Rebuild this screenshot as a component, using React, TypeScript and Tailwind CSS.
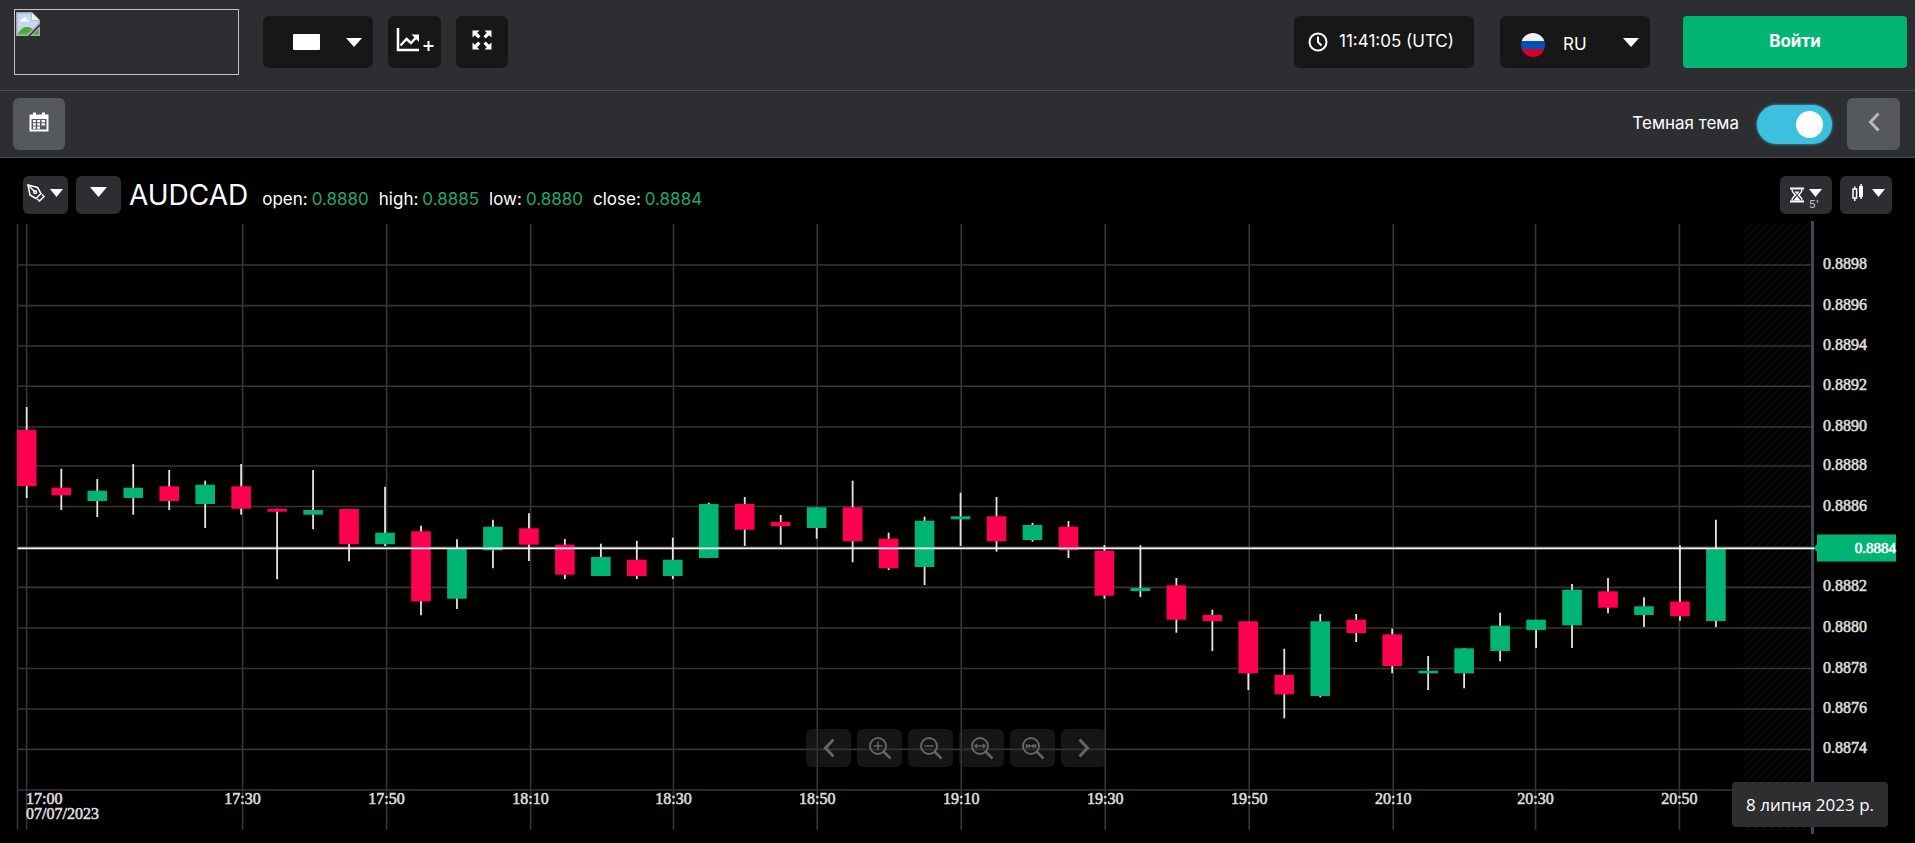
import type { ReactNode } from "react";

type Candle = {
  up: boolean;
  body: [number, number];
  wick: [number, number];
};

const c = (up: boolean, top: number, bottom: number, high = top, low = bottom): Candle => ({
  up,
  body: [top, bottom],
  wick: [high, low],
});

const candles: Candle[] = [
  c(false, 429.7, 486, 407, 498),
  c(false, 487.7, 495.3, 468.7, 510),
  c(true, 490.7, 501, 479, 517),
  c(true, 487.7, 498, 464, 514.7),
  c(false, 486.3, 501, 470, 510),
  c(true, 484.7, 504, 480.7, 528),
  c(false, 486.3, 508.7, 464, 514.7),
  c(false, 508.7, 511.7, 508.7, 579.3),
  c(true, 510, 514.7, 470, 529.3),
  c(false, 509, 544.3, 509, 561.3),
  c(true, 532.7, 544.3, 486.7, 546),
  c(false, 531.3, 601.3, 525.7, 615.3),
  c(true, 548, 598.7, 539.3, 609),
  c(true, 526.7, 550.3, 519.7, 568.3),
  c(false, 528.3, 544.7, 513.3, 561),
  c(false, 544.7, 574.7, 539, 579),
  c(true, 557, 576, 543.7, 576),
  c(false, 559.7, 576, 540.7, 579),
  c(true, 559.7, 576, 537.7, 579),
  c(true, 504, 558, 502.7, 558),
  c(false, 504, 529.7, 497, 546),
  c(false, 522, 526.3, 515, 544.7),
  c(true, 507.3, 528, 507.3, 538.7),
  c(false, 507.3, 541.3, 480.7, 562.3),
  c(false, 538.7, 568.3, 532.7, 570),
  c(true, 520.7, 567, 516.7, 585),
  c(true, 516.3, 519.3, 492.7, 546),
  c(false, 516.3, 541.3, 497, 551.7),
  c(true, 525, 540, 522.7, 541.7),
  c(false, 526.7, 550.3, 521, 558),
  c(false, 550.7, 595.7, 545, 598.7),
  c(true, 588, 591, 545.3, 597),
  c(false, 585.3, 619.7, 578, 632.7),
  c(false, 615, 621, 609.7, 651),
  c(false, 621.3, 673.3, 621.3, 690),
  c(false, 675, 694.3, 648.7, 718.3),
  c(true, 621.3, 696, 614, 697.3),
  c(false, 619.7, 633, 614, 642),
  c(false, 634.3, 666, 628.7, 673.3),
  c(true, 670.7, 673.3, 656, 690),
  c(true, 648.3, 673.3, 648.3, 688.3),
  c(true, 625.7, 651, 612.7, 661.3),
  c(true, 619.7, 630, 619.7, 648),
  c(true, 589.7, 625.3, 584, 648),
  c(false, 591.3, 607.7, 578, 613.3),
  c(true, 606.3, 615, 597.3, 627),
  c(false, 601.7, 616.3, 545.3, 620.7),
  c(true, 549, 621, 519.7, 627),
];

const candleX = (i: number) => (i === 0 ? 26.7 : 61.3 + (i - 1) * 35.97);

const times = [
  { x: 242.6, label: "17:30" },
  { x: 386.6, label: "17:50" },
  { x: 530.6, label: "18:10" },
  { x: 673.5, label: "18:30" },
  { x: 817.2, label: "18:50" },
  { x: 961.2, label: "19:10" },
  { x: 1105.2, label: "19:30" },
  { x: 1249.2, label: "19:50" },
  { x: 1393.2, label: "20:10" },
  { x: 1535.6, label: "20:30" },
  { x: 1679.4, label: "20:50" },
];

const prices = [
  { y: 265, label: "0.8898" },
  { y: 305.6, label: "0.8896" },
  { y: 346, label: "0.8894" },
  { y: 386.2, label: "0.8892" },
  { y: 427, label: "0.8890" },
  { y: 466, label: "0.8888" },
  { y: 506.5, label: "0.8886" },
  { y: 547, label: "" },
  { y: 587.4, label: "0.8882" },
  { y: 628, label: "0.8880" },
  { y: 668.5, label: "0.8878" },
  { y: 709, label: "0.8876" },
  { y: 749.4, label: "0.8874" },
  { y: 790, label: "" },
];

const quotes = [
  { name: "open:", value: "0.8880" },
  { name: "high:", value: "0.8885" },
  { name: "low:", value: "0.8880" },
  { name: "close:", value: "0.8884" },
];

function Caret({ className = "h-[9px] w-4" }: { className?: string }) {
  return (
    <svg viewBox="0 0 16 9" className={className} fill="currentColor" preserveAspectRatio="none" aria-hidden="true">
      <path d="M0 0h16L8 9z" />
    </svg>
  );
}

function BrokenImage() {
  return (
    <svg viewBox="0 0 24 24" className="h-6 w-6" aria-hidden="true">
      <path d="M0 0h16l8 8v4L12 24H0z" fill="#a9abae" />
      <path d="M1.500 1.500h14v7h7v3L11 22.500H1.500z" fill="#c3d9f8" />
      <path d="M16 1l7 7h-7z" fill="#f1f1f1" />
      <path d="M4 9.500c0-2 1.500-2.500 2.500-2.500C7 5 11 5 11 7.500c1.500 0 2 1 2 2z" fill="#fff" />
      <path d="M1.500 22.500C4 17 8 14.500 12 15c2 .2 3.500 1 4.500 2L11 22.500z" fill="#52a935" />
      <path d="M24 14v10H14z" fill="#a9abae" />
      <path d="M22.500 17v5.500H17z" fill="#52a935" />
    </svg>
  );
}

function ChartPlus() {
  return (
    <svg viewBox="0 0 38 24" className="h-6 w-[38px]" fill="none" stroke="currentColor" strokeWidth="2" aria-hidden="true">
      <path d="M2 0v22h21" strokeWidth="2.500" />
      <path d="M4.500 17.500l6-6.500 4.500 4 6-6.500" strokeWidth="2.400" />
      <path d="M15.500 6.500H23V14z" fill="currentColor" stroke="none" />
      <path d="M32.500 13v10M27.500 18h10" />
    </svg>
  );
}

function Expand() {
  return (
    <svg viewBox="0 0 20 20" className="h-5 w-5" fill="currentColor" aria-hidden="true">
      <path d="M.5.500h7L5.200 2.800l3.300 3.400-2.300 2.300-3.400-3.300L.5 7.500z" />
      <path d="M19.500.500v7l-2.300-2.300-3.400 3.300-2.300-2.300 3.300-3.400L12.500.500z" />
      <path d="M.5 19.500v-7l2.300 2.300 3.400-3.300 2.300 2.300-3.300 3.400 2.300 2.300z" />
      <path d="M19.500 19.500h-7l2.300-2.300-3.300-3.400 2.300-2.300 3.400 3.300 2.300-2.300z" />
    </svg>
  );
}

function Calendar() {
  return (
    <svg viewBox="0 0 20 20" className="h-5 w-5" fill="currentColor" aria-hidden="true">
      <path fillRule="evenodd" d="M.5 2.500H4V.5h3v2h6V.5h3v2h3.500v17H.5zM2.500 7v10.500h15V7z" />
      <path d="M4 8h2.800v2.300H4zM8.200 8H11v2.300H8.200zM12.500 8h3.500v2.300h-3.500zM4 11.200h2.800v2.300H4zM8.200 11.200H11v2.300H8.200zM12.500 11.200h3.500v2.300h-3.500zM4 14.400h2.800v2.300H4zM8.200 14.400H11v2.300H8.200z" />
    </svg>
  );
}

function Clock() {
  return (
    <svg viewBox="0 0 20 20" className="h-5 w-5" fill="none" stroke="currentColor" strokeWidth="2" aria-hidden="true">
      <circle cx="10" cy="10" r="8.500" />
      <path d="M10 4.500V10l3.500 3.500" />
    </svg>
  );
}

function Flag() {
  return (
    <svg viewBox="0 0 24 24" className="h-6 w-6" aria-hidden="true">
      <clipPath id="flag-round">
        <circle cx="12" cy="12" r="12" />
      </clipPath>
      <g clipPath="url(#flag-round)">
        <path d="M0 0h24v8H0z" fill="#f0f0f0" />
        <path d="M0 8h24v8H0z" fill="#0052b4" />
        <path d="M0 16h24v8H0z" fill="#d80027" />
      </g>
    </svg>
  );
}

function Pen() {
  return (
    <svg viewBox="0 0 18 18" className="h-[18px] w-[18px]" fill="none" stroke="currentColor" strokeWidth="1.500" aria-hidden="true">
      <path d="M1 1l9.500 2.500 3.500 6-5 5-6-3.500z" />
      <path d="M1 1l6.500 6.500" />
      <circle cx="8.200" cy="8.200" r="1.400" />
      <path d="M15 10.500l2 2-4.500 4.500-2-2" />
    </svg>
  );
}

function Hourglass() {
  return (
    <svg viewBox="0 0 16 16" className="h-4 w-4" fill="none" stroke="currentColor" aria-hidden="true">
      <path d="M1 1.500h14M1 14.500h14" strokeWidth="2" />
      <path d="M3 2.500c0 3 2 4 3.500 5.500C5 9.500 3 10.500 3 13.500M13 2.500c0 3-2 4-3.500 5.500 1.500 1.500 3.500 2.500 3.500 5.500" strokeWidth="1.500" />
      <path d="M5.500 4.500h5L8 7.500zM8 9l3.500 4.500h-7z" fill="currentColor" stroke="none" />
    </svg>
  );
}

function CandleIcon() {
  return (
    <svg viewBox="0 0 12 18" className="h-[18px] w-3" fill="none" stroke="currentColor" strokeWidth="1.500" aria-hidden="true">
      <path d="M2.800 2.500V5M2.800 14v3M1 5h3.600v9H1z" />
      <path d="M9 0v15" />
      <path d="M7 2h4v11H7z" fill="currentColor" stroke="none" />
    </svg>
  );
}

function Magnifier({ children }: { children: ReactNode }) {
  return (
    <svg viewBox="0 0 24 24" className="h-6 w-6" fill="none" stroke="currentColor" strokeWidth="2" aria-hidden="true">
      <circle cx="10" cy="10" r="8" />
      <path d="M15.500 15.500l7 7" strokeWidth="2.500" />
      {children}
    </svg>
  );
}

function Chevron({ d }: { d: string }) {
  return (
    <svg viewBox="0 0 12 20" className="h-5 w-3" fill="none" stroke="currentColor" strokeWidth="3" aria-hidden="true">
      <path d={d} />
    </svg>
  );
}

const LEFT = "M10.500 1.500L2.500 10l8 8.500";
const RIGHT = "M1.500 1.500l8 8.500-8 8.500";

const zoomButtons = [
  { label: "Back", icon: <Chevron d={LEFT} /> },
  { label: "Zoom in", icon: <Magnifier><path d="M10 5.500v9M5.500 10h9" strokeWidth="1.500" /></Magnifier> },
  { label: "Zoom out", icon: <Magnifier><path d="M5.500 10h9" strokeWidth="1.500" /></Magnifier> },
  { label: "Widen", icon: <Magnifier><path d="M5.500 10h9M7 8l-2 2 2 2M13 8l2 2-2 2" strokeWidth="1.500" /></Magnifier> },
  { label: "Narrow", icon: <Magnifier><path d="M5.500 10h9M5.500 8v4M14.500 8v4M8.500 8.500L7 10l1.500 1.500M11.500 8.500L13 10l-1.500 1.500" strokeWidth="1.500" /></Magnifier> },
  { label: "Forward", icon: <Chevron d={RIGHT} /> },
];

function PriceChart() {
  return (
    <svg viewBox="0 220 1915 623" className="block h-auto w-full" role="img" aria-label="AUDCAD">
      <defs>
        <pattern id="hatch" width="8" height="8" patternUnits="userSpaceOnUse">
          <path d="M-2 2l4-4M0 8l8-8M6 10l4-4" stroke="#0a0a0a" strokeWidth="2" />
        </pattern>
      </defs>
      <rect x="1743" y="224" width="68" height="606" fill="url(#hatch)" />
      <g stroke="#363636" strokeWidth="1.600">
        <path d="M17.500 224v606M26.600 224v606" />
        {times.map((t) => (
          <path key={t.label} d={`M${t.x} 224v606`} />
        ))}
        {prices.map((p) => (
          <path key={p.y} d={`M17.500 ${p.y}H1811`} />
        ))}
      </g>
      <rect x="1811" y="221" width="3" height="613" fill="#3b4856" />
      {candles.map((k, i) => (
        <g key={i}>
          <path d={`M${candleX(i)} ${k.wick[0]}V${k.wick[1]}`} stroke="#e4e4e4" strokeWidth="1.800" />
          <rect
            x={candleX(i) - 9.8}
            y={k.body[0]}
            width="19.600"
            height={k.body[1] - k.body[0]}
            fill={k.up ? "#00b574" : "#ff0050"}
          />
        </g>
      ))}
      <path d="M17.500 548.400H1815" stroke="#ffffff" strokeWidth="1.900" />
      <path d="M1814 548l3-4v-9.500h79v27h-79V552z" fill="#00b574" />
      <g className="font-['Liberation_Serif',serif] text-[16px]" fill="#dcdcdc" stroke="#dcdcdc" strokeWidth="0.600">
        {prices.map((p) => (
          <text key={p.y} x="1823" y={p.y + 4}>
            {p.label}
          </text>
        ))}
        <text x="1896" y="553" textAnchor="end" className="text-[15px]" fill="#ffffff" stroke="#ffffff">
          0.8884
        </text>
        <text x="26" y="804">17:00</text>
        <text x="26" y="819">07/07/2023</text>
        {times.map((t) => (
          <text key={t.label} x={t.x} y="804" textAnchor="middle">
            {t.label}
          </text>
        ))}
      </g>
    </svg>
  );
}

export default function App() {
  return (
    <div className="relative min-h-screen bg-black font-['Inter','Open_Sans',sans-serif] text-[17px] text-white">
      <header className="flex items-start justify-between border-b border-[#4b4d51] bg-[#2d2e32] pt-[9px] pr-2 pb-[15px] pl-[14px]">
        <div className="flex items-start">
          <a href="#" aria-label="Home" className="flex h-[66px] w-[225px] border border-[#c4c4c6] px-px py-0.5">
            <BrokenImage />
          </a>
          <div className="mt-[7px] ml-6 flex gap-[15px]">
            <button aria-label="Layout" className="flex h-[52px] w-[110px] items-center justify-end gap-[26px] rounded-md bg-[#171717] pr-[11px]">
              <span className="h-4 w-[27px] rounded-[1px] bg-white" />
              <Caret />
            </button>
            <button aria-label="Add chart" className="flex h-[52px] w-[53px] items-center justify-center rounded-md bg-[#171717] pb-1">
              <ChartPlus />
            </button>
            <button aria-label="Full screen" className="flex h-[52px] w-[52px] items-center justify-center rounded-md bg-[#171717] pb-1">
              <Expand />
            </button>
          </div>
        </div>
        <div className="mt-[7px] flex">
          <div className="flex h-[52px] w-[180px] items-center gap-[11px] rounded-md bg-[#171717] pl-[14px] whitespace-nowrap">
            <Clock />
            <span>11:41:05 (UTC)</span>
          </div>
          <button className="ml-[26px] flex h-[52px] w-[150px] items-center justify-between rounded-md bg-[#171717] pr-[11px] pl-[21px]">
            <span className="flex items-center gap-[18px] pt-1.5">
              <Flag />
              RU
            </span>
            <Caret />
          </button>
          <button className="ml-[33px] h-[52px] w-[224px] rounded bg-[#00b574] font-bold">Войти</button>
        </div>
      </header>

      <div className="flex items-center justify-between border-b border-[#4b4d51] bg-[#2d2e32] pt-[7px] pr-[15px] pb-[7px] pl-[13px]">
        <button aria-label="Calendar" className="flex h-[52px] w-[52px] items-center justify-center rounded-md bg-[#55585c] pb-1">
          <Calendar />
        </button>
        <div className="flex items-center">
          <label htmlFor="theme">Темная тема</label>
          <input
            id="theme"
            type="checkbox"
            role="switch"
            defaultChecked
            className="ml-[18px] flex h-[39px] w-[75px] appearance-none items-center rounded-full bg-[#3dbfe0] px-[9px] shadow-[0_0_3px_#3dbfe0] before:h-[27px] before:w-[27px] before:rounded-full before:bg-white checked:justify-end"
          />
          <button aria-label="Collapse" className="ml-[15px] flex h-[52px] w-[53px] items-center justify-center rounded-md bg-[#55585c] pb-1 text-[#b9babc]">
            <Chevron d={LEFT} />
          </button>
        </div>
      </div>

      <main className="relative">
        <div className="flex h-[62px] items-start justify-between pt-[18px] pr-[23px] pl-[23px]">
          <div className="flex items-start">
            <button aria-label="Draw" className="flex h-[38px] w-[45px] items-center gap-[5px] rounded-md bg-[#2d2e32] pb-1 pl-1">
              <Pen />
              <Caret className="h-2 w-[13px]" />
            </button>
            <button aria-label="Instrument" className="ml-2 flex h-[38px] w-[45px] items-center justify-center rounded-md bg-[#2d2e32] pb-1.5">
              <Caret className="h-[10px] w-[17px]" />
            </button>
            <div className="ml-2 flex items-baseline">
              <h1 className="text-[28px] leading-[38px]">AUDCAD</h1>
              <dl className="ml-[14px] flex gap-[10px]">
                {quotes.map((q) => (
                  <div key={q.name} className="flex gap-1">
                    <dt>{q.name}</dt>
                    <dd className="text-[#1fa869]">{q.value}</dd>
                  </div>
                ))}
              </dl>
            </div>
          </div>
          <div className="flex gap-2">
            <button className="relative flex h-[38px] w-[52px] items-center gap-1 rounded-md bg-[#2d2e32] pl-[9px]">
              <Hourglass />
              <Caret className="mb-1 h-2 w-[13px]" />
              <span className="absolute right-[13px] bottom-1 text-[11px] leading-none text-[#c4c4c6]">5'</span>
            </button>
            <button aria-label="Chart type" className="flex h-[38px] w-[52px] items-center gap-2 rounded-md bg-[#2d2e32] pb-1 pl-3">
              <CandleIcon />
              <Caret className="h-2 w-[13px]" />
            </button>
          </div>
        </div>

        <PriceChart />

        <div className="absolute inset-x-0 bottom-[76px] flex justify-center gap-1.5 pr-[3px]">
          {zoomButtons.map((b) => (
            <button
              key={b.label}
              aria-label={b.label}
              className="flex h-[38px] w-[45px] items-center justify-center rounded-md bg-[#2d2e32]/45 text-[#77787a]/80"
            >
              {b.icon}
            </button>
          ))}
        </div>

        <div role="status" className="absolute right-[27px] bottom-4 rounded bg-[#2e2e30] px-[14px] py-[10px] font-['Open_Sans','Noto_Sans',sans-serif] leading-[25px]">
          8 липня 2023 р.
        </div>
      </main>
    </div>
  );
}
